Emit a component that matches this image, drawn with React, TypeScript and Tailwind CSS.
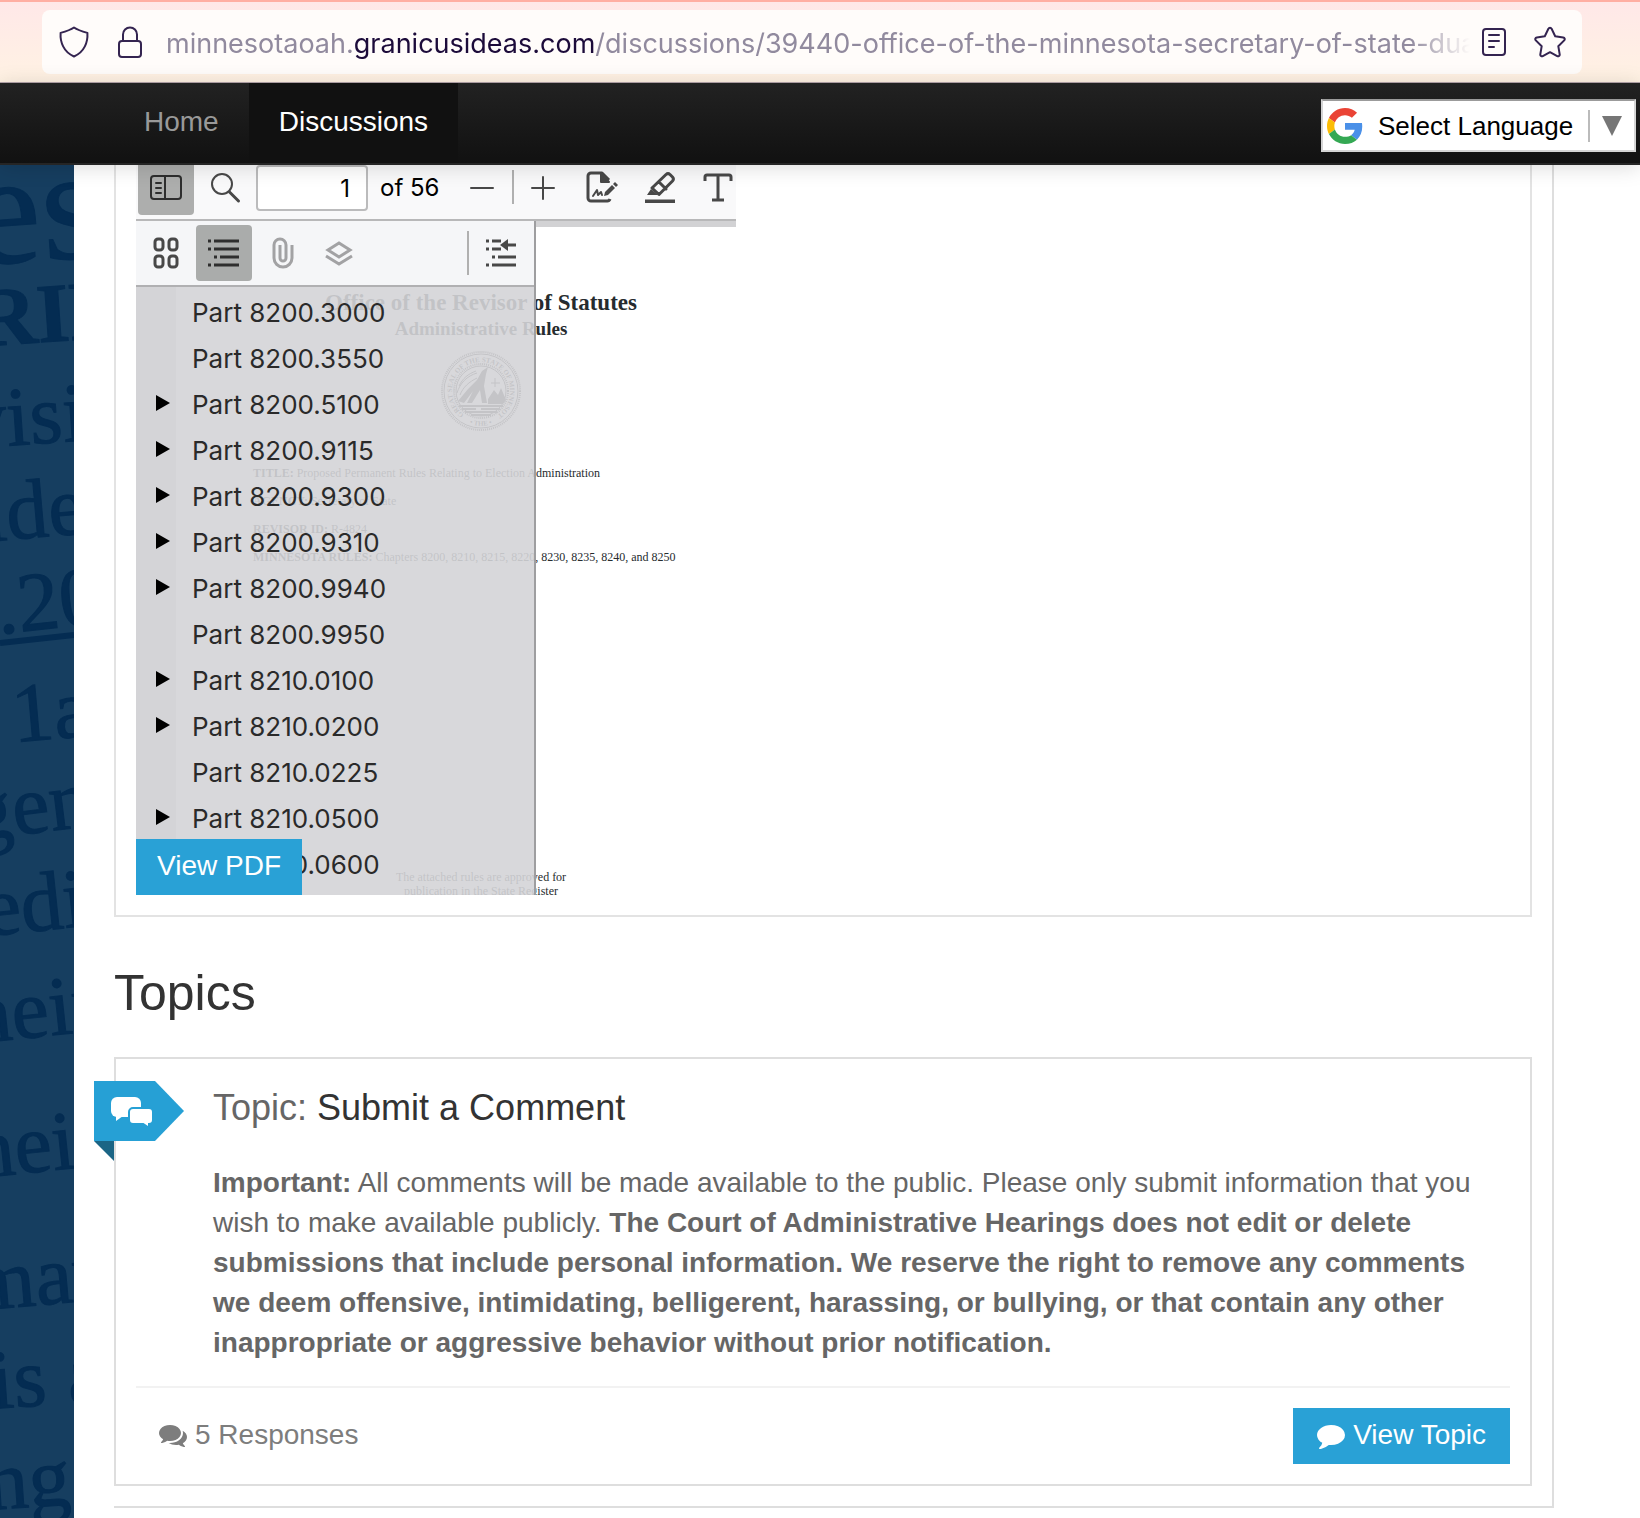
import React from "react";

type OutlineItem = { label: string; nested?: boolean };

const outline: OutlineItem[] = [
  { label: "Part 8200.3000" },
  { label: "Part 8200.3550" },
  { label: "Part 8200.5100", nested: true },
  { label: "Part 8200.9115", nested: true },
  { label: "Part 8200.9300", nested: true },
  { label: "Part 8200.9310", nested: true },
  { label: "Part 8200.9940", nested: true },
  { label: "Part 8200.9950" },
  { label: "Part 8210.0100", nested: true },
  { label: "Part 8210.0200", nested: true },
  { label: "Part 8210.0225" },
  { label: "Part 8210.0500", nested: true },
  { label: "Part 8210.0600" },
];

type IconProps = { className?: string; children: React.ReactNode };

function Icon({ className = "size-8", children }: IconProps) {
  return (
    <svg
      viewBox="0 0 32 32"
      className={`shrink-0 ${className}`}
      fill="none"
      stroke="currentColor"
      strokeWidth="2"
      strokeLinecap="round"
      strokeLinejoin="round"
      aria-hidden="true"
    >
      {children}
    </svg>
  );
}

function GoogleLogo() {
  return (
    <svg viewBox="0 0 48 48" className="size-9 shrink-0" aria-hidden="true">
      <path fill="#EA4335" d="M24 9.5c3.54 0 6.71 1.22 9.21 3.6l6.85-6.85C35.9 2.38 30.47 0 24 0 14.62 0 6.51 5.38 2.56 13.22l7.98 6.19C12.43 13.72 17.74 9.5 24 9.5z" />
      <path fill="#4A90E8" d="M46.98 24.55c0-1.57-.15-3.09-.38-4.55H24v9.02h12.94c-.58 2.96-2.26 5.48-4.78 7.18l7.73 6c4.51-4.18 7.09-10.36 7.09-17.65z" />
      <path fill="#FBBC05" d="M10.53 28.59c-.48-1.45-.76-2.99-.76-4.59s.27-3.14.76-4.59l-7.98-6.19C.92 16.46 0 20.12 0 24c0 3.88.92 7.54 2.56 10.78l7.97-6.19z" />
      <path fill="#34A853" d="M24 48c6.48 0 11.93-2.13 15.89-5.81l-7.73-6c-2.15 1.45-4.92 2.3-8.16 2.3-6.26 0-11.57-4.22-13.47-9.91l-7.98 6.19C6.51 42.62 14.62 48 24 48z" />
    </svg>
  );
}

function AddressBar() {
  return (
    <div className="border-t-2 border-b border-t-[#ffafa3] border-b-[#b5a5ab] bg-linear-to-b from-[#ffe8e8] to-[#fff2e3] pt-2 pr-[58px] pb-2 pl-[42px]">
      <div className="flex h-16 items-center rounded-lg bg-[#fffcfa] px-4 text-[#342450]">
        <Icon>
          <path d="M16 1.500c-4 2.800-8.300 4-13.400 5.400C2 16 5.500 26 16 30.500 26.500 26 30 16 29.400 6.900 24.300 5.500 20 4.300 16 1.500z" />
        </Icon>
        <Icon className="ml-6 size-8">
          <rect x="5" y="15" width="22" height="16" rx="3" />
          <path d="M9 15V8.500a7 7 0 0 1 14 0V15" />
        </Icon>
        <div
          role="textbox"
          aria-label="Address"
          className="ml-5 min-w-0 flex-1 overflow-hidden pt-1 font-['Inter',sans-serif] text-[27px] whitespace-nowrap text-[#918a9e] [mask-image:linear-gradient(to_left,transparent,#000_60px)]"
        >
          minnesotaoah.<span className="text-[#1c0b3a]">granicusideas.com</span>
          /discussions/39440-office-of-the-minnesota-secretary-of-state-dua
        </div>
        <button type="button" aria-label="Reader view" className="ml-2">
          <Icon>
            <rect x="5" y="3" width="22" height="26" rx="3" />
            <path d="M11 9h10M11 15h10M11 21h5" />
          </Icon>
        </button>
        <button type="button" aria-label="Bookmark this page" className="ml-6">
          <Icon>
            <path d="M16 1.700c.7 0 1.300.4 1.600 1l3.600 7.500 8 1.200c1.500.2 2 2 1 3l-5.900 5.800 1.400 8.100c.2 1.400-1.200 2.400-2.500 1.800L16 26.200l-7.200 3.900c-1.300.6-2.700-.4-2.500-1.800l1.400-8.100-5.900-5.800c-1-1-.5-2.800 1-3l8-1.200 3.600-7.500c.3-.6.900-1 1.600-1z" />
          </Icon>
        </button>
      </div>
    </div>
  );
}

function NavBar() {
  return (
    <nav className="relative z-10 flex h-[82px] items-stretch justify-between border-b-2 border-[#252525] bg-linear-to-b from-[#222] to-[#111] pr-1 pl-[114px] shadow-[0_2px_20px_rgba(0,0,0,0.15)]">
      <div className="flex text-[28px]">
        <a href="#home" className="flex items-center px-[30px] pb-[2px] text-[#999]">Home</a>
        <a href="#discussions" aria-current="page" className="flex items-center bg-[#111] px-[30px] pb-[2px] text-white">
          Discussions
        </a>
      </div>
      <div className="relative mt-4 flex h-[53px] items-center border-2 border-t-[#9b9b9b] border-r-[#d5d5d5] border-b-[#d5d5d5] border-l-[#d5d5d5] bg-white pl-1">
        <GoogleLogo />
        <label htmlFor="language" className="sr-only">Language</label>
        <select id="language" className="w-[271px] appearance-none bg-transparent pt-[2px] pl-[15px] text-[26px] text-black outline-none">
          <option>Select Language</option>
        </select>
        <span className="pointer-events-none absolute right-11 h-8 w-[2px] bg-[#bbb]" />
        <svg viewBox="0 0 20 20" className="pointer-events-none absolute right-3 size-5" aria-hidden="true">
          <path d="M0 0h20L10 20z" fill="#767676" />
        </svg>
      </div>
    </nav>
  );
}

// Tilted legal text that runs behind the page on the left
function Backdrop() {
  return (
    <aside className="w-[74px] shrink-0 bg-[#163e60]" aria-hidden="true">
      <svg viewBox="0 0 74 1353" className="block w-full" fill="#042c52" fontFamily="'Liberation Serif', serif" fontSize="84">
        <g stroke="#042c52" strokeWidth="1">
          <text x="-27" y="97" fontSize="160" transform="rotate(-4 18 97)">es</text>
          <text x="-22" y="179" fontWeight="bold" transform="rotate(-4 18 179)">RID</text>
          <text x="-34" y="280" transform="rotate(-4 18 280)">visi</text>
          <text x="-15" y="374" transform="rotate(-5 18 374)">ide</text>
          <text x="-1" y="467" transform="rotate(-6 18 467)">.20</text>
          <path d="M0 478L74 470" strokeWidth="6" />
          <text x="14" y="577" transform="rotate(-5 18 577)">1a</text>
          <text x="-27" y="670" transform="rotate(-7 18 670)">gen</text>
          <text x="-14" y="768" transform="rotate(-6 18 768)">edi</text>
          <text x="-28" y="874" transform="rotate(-6 18 874)">heir</text>
          <text x="-25" y="1009" transform="rotate(-6 18 1009)">heir</text>
          <text x="-28" y="1142" transform="rotate(-5 18 1142)">may</text>
          <text x="-8" y="1242" transform="rotate(-4 18 1242)">is a</text>
          <text x="-12" y="1343" transform="rotate(-4 18 1343)">ng</text>
        </g>
      </svg>
    </aside>
  );
}

function PdfToolbar() {
  return (
    <div className="flex h-14 items-start border-b-2 border-[#b8b8b9] bg-[#f9f9fa] pl-[2px] text-[#484848]">
      <button type="button" aria-label="Toggle sidebar" className="flex h-[50px] w-14 items-center justify-center rounded-b bg-[#adaead] pb-1 text-[#2e2e2e]">
        <Icon>
          <rect x="1" y="4" width="30" height="23" rx="3" />
          <path d="M15 4v23M6 11h5M6 16h5M6 21h5" />
        </Icon>
      </button>
      <button type="button" aria-label="Find" className="flex h-[46px] w-[62px] items-center justify-center">
        <Icon>
          <circle cx="13" cy="12" r="10" />
          <path d="M20.500 20l9 9" strokeWidth="3" />
        </Icon>
      </button>
      <input
        aria-label="Page"
        defaultValue="1"
        className="h-[46px] w-28 rounded border-2 border-[#bbbbbc] bg-white pr-4 text-right font-['Inter',sans-serif] text-2xl text-black"
      />
      <span className="w-[60px] pl-3 font-['Inter',sans-serif] text-2xl leading-[46px] whitespace-nowrap text-black">of 56</span>
      <button type="button" aria-label="Zoom out" className="ml-[38px] flex h-[46px] items-center">
        <Icon>
          <path d="M5 16h22" />
        </Icon>
      </button>
      <span className="mt-[5px] ml-[14px] h-[34px] w-[2px] bg-[#b0b0b0]" />
      <button type="button" aria-label="Zoom in" className="ml-[13px] flex h-[46px] items-center">
        <Icon>
          <path d="M5 16h22M16 5v22" />
        </Icon>
      </button>
      <button type="button" aria-label="Add signature" className="ml-[27px] flex h-11 items-center">
        <Icon>
          <path d="M24 28a3 3 0 0 1-3 2H5a3 3 0 0 1-3-3V5a3 3 0 0 1 3-3h11l7 7" strokeWidth="3" strokeLinecap="butt" />
          <path d="M15 2v9h8z" fill="currentColor" />
          <path d="M7 25l4-6 1 5 3-3 1 3" />
          <path d="M18 25l1-4 7-7 3 3-7 7z" fill="currentColor" stroke="none" />
          <path d="M27 13l2-2 3 3-2 2z" fill="currentColor" stroke="none" />
        </Icon>
      </button>
      <button type="button" aria-label="Highlight" className="ml-[26px] flex h-11 items-center">
        <Icon>
          <path d="M1 30.500h30" strokeWidth="4" strokeLinecap="butt" />
          <path d="M8 17L22 3.500a3 3 0 0 1 4 0l2.500 2.500a3 3 0 0 1 0 4L15 23.500zM15 11l7 7" strokeWidth="3" />
          <path d="M7 18l7 6H3z" fill="currentColor" stroke="none" />
        </Icon>
      </button>
      <button type="button" aria-label="Add text" className="ml-[26px] flex h-11 items-center">
        <Icon>
          <path d="M3 10V6a2 2 0 0 1 2-2h22a2 2 0 0 1 2 2v4M16 4v25M10 29h12" strokeWidth="3" strokeLinecap="butt" />
        </Icon>
      </button>
    </div>
  );
}

function StateSeal() {
  return (
    <svg viewBox="0 0 80 80" className="size-20" fill="none" stroke="#333" aria-hidden="true">
      <circle cx="40" cy="40" r="39" strokeWidth="2" strokeDasharray="1 1" />
      <circle cx="40" cy="40" r="37" strokeWidth="1" />
      <circle cx="40" cy="40" r="27" strokeWidth="2" strokeDasharray="1 1" />
      <circle cx="40" cy="40" r="25" strokeWidth="1" />
      <path id="seal-ring" d="M23 63.500A29 29 0 1 1 57 63.500" stroke="none" />
      <path id="seal-foot" d="M18 67A35 35 0 0 0 62 67" stroke="none" />
      <text fill="#333" stroke="none" fontSize="7" fontFamily="'Liberation Serif', serif">
        <textPath href="#seal-ring">GREAT SEAL OF THE STATE OF MINNESOTA</textPath>
      </text>
      <text fill="#333" stroke="none" fontSize="7" fontFamily="'Liberation Serif', serif">
        <textPath href="#seal-foot" startOffset="12">• THE •</textPath>
      </text>
      <path d="M17 50l10-12 9-9 5-9 6-4-2 7-2 12 3 17h-5l-2-13-8 13h-5l6-12-9 12zM47 48l6-9 4 5 3-7 5 12-3 4H47z" fill="#333" stroke="none" />
      <path d="M18 55h44M21 58h14M40 58h19M24 61h32M30 64h20" strokeWidth="2" />
      <path d="M16 42c3-10 10-17 20-20M19 44c3-8 9-13 17-17M18 35c4-8 9-12 17-15M54 27v9M50 32h9" strokeWidth="1" />
    </svg>
  );
}

function PdfPage() {
  return (
    <div className="col-start-1 row-start-1 border-t-6 border-[#d2d2d4] bg-[#d4d4d7] pl-10">
      <div className="h-full bg-white font-['Liberation_Serif',serif] text-xs whitespace-nowrap text-[#262b2e]">
        <div className="w-[610px]">
          <div className="flex flex-col items-center pt-16 font-bold">
            <p className="text-[23px] leading-6">Office of the Revisor of Statutes</p>
            <p className="text-[19px] leading-7">Administrative Rules</p>
            <div className="pt-2">
              <StateSeal />
            </div>
          </div>
          <div className="space-y-4 pt-9 pl-[77px] leading-3">
            <p><b>TITLE:</b> Proposed Permanent Rules Relating to Election Administration</p>
            <p><b>AGENCY:</b> Secretary of State</p>
            <p><b>REVISOR ID:</b> R-4824</p>
            <p><b>MINNESOTA RULES:</b> Chapters 8200, 8210, 8215, 8220, 8230, 8235, 8240, and 8250</p>
          </div>
          <div className="pt-[307px] text-center leading-[14px]">
            <p>The attached rules are approved for</p>
            <p>publication in the State Register</p>
          </div>
        </div>
      </div>
    </div>
  );
}

function PdfSidebar() {
  return (
    <div className="z-1 col-start-1 row-start-1 w-[400px] border-r-2 border-[#9e9ea0]">
      <div className="flex h-[66px] items-center border-b-2 border-[#b0b0b2] bg-[#f5f6f8] pr-[17px] text-[#484848]">
        <button type="button" aria-label="Thumbnails" className="flex w-[60px] justify-center">
          <Icon>
            <g strokeWidth="3">
              <rect x="5" y="2" width="8" height="11" rx="3" />
              <rect x="19" y="2" width="8" height="11" rx="3" />
              <rect x="5" y="19" width="8" height="11" rx="3" />
              <rect x="19" y="19" width="8" height="11" rx="3" />
            </g>
          </Icon>
        </button>
        <button type="button" aria-label="Document outline" className="flex h-14 w-14 items-center justify-center rounded bg-[#aaacab] text-[#2e2e2e]">
          <Icon>
            <path d="M6 4h25M6 12h25M12 20h19M6 28h25M0 4h3M0 12h3M6 20h3M0 28h3" strokeWidth="3" strokeLinecap="butt" />
          </Icon>
        </button>
        <button type="button" aria-label="Attachments" className="ml-[15px] text-[#a2a2a4]">
          <Icon>
            <path d="M25 8v13a9 9 0 0 1-18 0V8a6 6 0 0 1 12 0v13a3 3 0 0 1-6 0V8" strokeWidth="3" strokeLinecap="butt" />
          </Icon>
        </button>
        <button type="button" aria-label="Layers" className="ml-6 text-[#a2a2a4]">
          <Icon>
            <path d="M16 6l11 7-11 7-11-7zM3 19l13 8 13-8" strokeWidth="3" strokeLinecap="butt" strokeLinejoin="miter" />
          </Icon>
        </button>
        <span className="ml-auto h-11 w-[2px] bg-[#b0b0b0]" />
        <button type="button" aria-label="Current outline item" className="ml-4">
          <Icon>
            <path d="M7 4h9M7 12h9M13 20h18M7 28h24M1 4h3M1 12h3M7 20h3M1 28h3M22 8h9" strokeWidth="3" strokeLinecap="butt" />
            <path d="M15 8l8-6v12z" fill="currentColor" stroke="none" />
          </Icon>
        </button>
      </div>
      <ul className="h-[608px] overflow-hidden bg-[#d4d4d7]/90 pt-[3px] font-['Inter',sans-serif] text-[26px] leading-[46px] text-[#2a2a2a]">
        {outline.map((item) => (
          <li key={item.label} className="flex items-center pl-5">
            <span className="w-9">
              {item.nested && (
                <svg viewBox="0 0 14 16" className="mb-1 h-4 w-[14px]" fill="#000" aria-hidden="true">
                  <path d="M0 0l14 8-14 8z" />
                </svg>
              )}
            </span>
            <a href="#outline">{item.label}</a>
          </li>
        ))}
      </ul>
    </div>
  );
}

function PdfViewer() {
  return (
    <section className="border-x-2 border-b-2 border-[#e3e3e3] pb-5 pl-5">
      <div className="relative h-[730px] w-[600px] overflow-hidden">
        <PdfToolbar />
        <div className="grid h-[674px] grid-cols-1">
          <PdfPage />
          <PdfSidebar />
        </div>
        <a href="#pdf" className="absolute bottom-0 left-0 z-2 flex h-14 w-[166px] items-center justify-center bg-[#29a1d6] pb-[2px] text-[28px] text-white">
          View PDF
        </a>
      </div>
    </section>
  );
}

function TopicFlag() {
  return (
    <svg viewBox="0 0 90 80" className="absolute top-[22px] -left-[22px] h-20 w-[90px]" aria-hidden="true">
      <path d="M0 0h61l29 30-29 30H0z" fill="#26a0d5" />
      <path d="M0 60h20v20z" fill="#1b6585" />
      <rect x="17" y="16" width="30" height="20" rx="6" fill="#fff" />
      <path d="M22 35v5l7-5z" fill="#fff" />
      <rect x="35" y="27" width="24" height="16" rx="4" fill="#fff" stroke="#26a0d5" strokeWidth="2" />
      <path d="M48 41l6 4v-4z" fill="#fff" />
    </svg>
  );
}

function TopicCard() {
  return (
    <article className="relative border-2 border-[#dedede] px-5 pt-[25px] pb-5">
      <TopicFlag />
      <div className="pr-5 pb-[23px] pl-[77px]">
        <h3 className="text-4xl leading-[48px] text-[#333]">
          <span className="text-[#666]">Topic:</span> Submit a Comment
        </h3>
        <p className="mt-[31px] text-[28px] leading-10 text-[#666]">
          <b>Important:</b> All comments will be made available to the public. Please only submit information that you
          wish to make available publicly.{" "}
          <b>
            The Court of Administrative Hearings does not edit or delete submissions that include personal information.
            We reserve the right to remove any comments we deem offensive, intimidating, belligerent, harassing, or
            bullying, or that contain any other inappropriate or aggressive behavior without prior notification.
          </b>
        </p>
      </div>
      <div className="flex items-center justify-between border-t-2 border-[#f2f2f2] pt-5 text-[28px]">
        <span className="flex items-center gap-2 pb-[2px] pl-[23px] text-[#7d7d7d]">
          <svg viewBox="0 0 1792 1792" className="size-7" fill="currentColor" aria-hidden="true">
            <path d="M1408 768q0 139-94 257t-256.500 186.500-353.500 68.500q-86 0-176-16-124 88-278 128-36 9-86 16h-3q-11 0-20.500-8t-11.500-21q-1-3-1-6.500t.5-6.500 2-6l2.500-5 3.500-5.500 4-5 4.500-5 4-4.500q5-6 23-25t26-29.500 22.500-29 25-38.500 20.500-44q-124-72-195-177t-71-224q0-139 94-257t256.500-186.500 353.500-68.500 353.500 68.500 256.500 186.500 94 257zm384 256q0 120-71 224.500t-195 176.500q10 24 20.500 44t25 38.500 22.500 29 26 29.500 23 25q1 1 4 4.500t4.500 5 4 5 3.500 5.500l2.500 5 2 6 .5 6.500-1 6.500q-3 14-13 22t-22 7q-50-7-86-16-154-40-278-128-90 16-176 16-271 0-472-132 58 4 88 4 161 0 309-45t264-129q125-92 192-212t67-254q0-77-23-152 129 71 204 178t75 230z" />
          </svg>
          5 Responses
        </span>
        <a href="#topic" className="flex h-14 items-center gap-2 bg-[#29a1d6] px-6 pb-[2px] text-white">
          <svg viewBox="0 0 1792 1792" className="size-7" fill="currentColor" aria-hidden="true">
            <path d="M1792 896q0 174-120 321.500t-326 233-450 85.500q-70 0-145-8-198 175-460 242-49 14-114 22-17 2-30.500-9t-17.500-29v-1q-3-4-.5-12t2-10 4.500-9.500l6-9 7-8.500 8-9q7-8 31-34.500t34.500-38 31-39.500 32.500-51 27-59 26-76q-157-89-247.500-220t-90.500-281q0-130 71-248.500t191-204.500 286-136.500 348-50.500q244 0 450 85.500t326 233 120 321.500z" />
          </svg>
          View Topic
        </a>
      </div>
    </article>
  );
}

export default function App() {
  return (
    <div className="flex min-h-screen flex-col bg-white font-['Liberation_Sans',Arial,sans-serif]">
      <AddressBar />
      <NavBar />
      <div className="flex flex-1">
        <Backdrop />
        <main className="min-w-0 flex-1 pr-[86px] pb-[10px] pl-10">
          <div className="border-r-2 border-b-2 border-[#dedede] pr-5 pb-5">
            <PdfViewer />
            <h2 className="mt-[46px] mb-[34px] text-[50px] leading-[60px] text-[#333]">Topics</h2>
            <TopicCard />
          </div>
        </main>
      </div>
    </div>
  );
}
